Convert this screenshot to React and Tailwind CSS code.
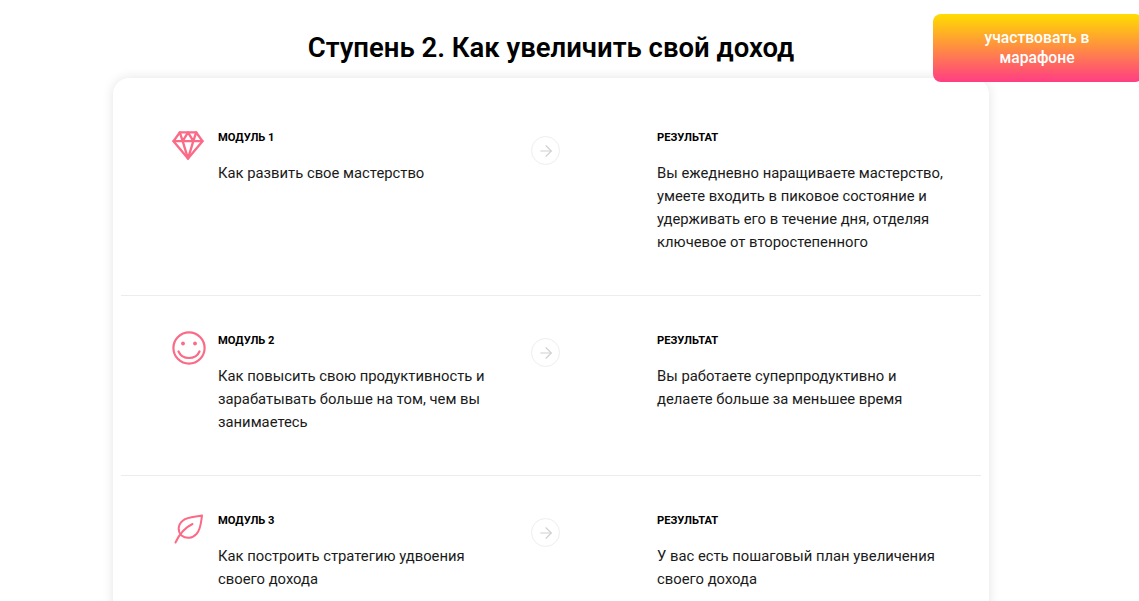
import React from 'react';
import { ArrowRight } from 'lucide-react';

const font = { fontFamily: 'Roboto, sans-serif' };

const DiamondIcon = () => (
  <svg width="32" height="29" viewBox="0 0 32 30" fill="none" stroke="#fb6a86" strokeWidth="2.4" strokeLinejoin="round" strokeLinecap="round">
    <path d="M7.5 1.5h17L31 10.5 16 28.5 1 10.5z" />
    <path d="M1 10.5h30M10.5 10.5 16 28.5l5.5-18M7.5 1.5l3 9L16 1.5l5.5 9 3-9" />
  </svg>
);

const SmileIcon = () => (
  <svg width="34" height="34" viewBox="0 0 34 34" fill="none" stroke="#fb6a86" strokeWidth="2.2" strokeLinecap="round">
    <circle cx="17" cy="17" r="15.6" />
    <circle cx="11" cy="12.5" r="1.9" fill="#fb6a86" stroke="none" />
    <circle cx="23" cy="12.5" r="1.9" fill="#fb6a86" stroke="none" />
    <path d="M6.5 20.5c2 4.5 6 6.5 10.5 6.5s8.500-2 10.500-6.500" />
  </svg>
);

const LeafIcon = () => (
  <svg width="30" height="30" viewBox="0 0 30 30" fill="none" stroke="#fb6a86" strokeWidth="2" strokeLinecap="round" strokeLinejoin="round">
    <path d="M28 1.500C22 3 14 2.500 9 6.500 3.500 11 3.500 17.500 7.500 21.500c4.500 3.500 11 3 15-1.500C27 15 27 8 28 1.500z" />
    <path d="M1.500 28.500C5 21 11 13.500 18.500 10" />
  </svg>
);

const modules = [
  {
    label: 'МОДУЛЬ 1',
    icon: <DiamondIcon />,
    iconClass: 'mt-[1px]',
    arrowClass: 'mt-[6px]',
    title: 'Как развить свое мастерство',
    result: 'Вы ежедневно наращиваете мастерство, умеете входить в пиковое состояние и удерживать его в течение дня, отделяя ключевое от второстепенного',
  },
  {
    label: 'МОДУЛЬ 2',
    icon: <SmileIcon />,
    iconClass: 'mt-[-2px]',
    arrowClass: 'mt-[5px]',
    title: 'Как повысить свою продуктивность и зарабатывать больше на том, чем вы занимаетесь',
    result: 'Вы работаете суперпродуктивно и делаете больше за меньшее время',
  },
  {
    label: 'МОДУЛЬ 3',
    icon: <LeafIcon />,
    iconClass: 'mt-[1px] pl-[2px]',
    arrowClass: 'mt-[5px]',
    title: 'Как построить стратегию удвоения своего дохода',
    result: 'У вас есть пошаговый план увеличения своего дохода',
  },
];

const ModuleRow = ({ item, first }) => (
  <div className={`flex mx-2 pl-[51px] pb-[41px] ${first ? 'pt-[52px]' : 'pt-[37px] border-t border-[#ececec]'}`}>
    <div className={`w-[46px] shrink-0 ${item.iconClass}`}>{item.icon}</div>
    <div className="w-[313px] shrink-0 pr-[28px]">
      <div className="text-[11.2px] leading-[16px] font-bold text-black">{item.label}</div>
      <p className="mt-[16px] text-[14.8px] leading-[23px] text-[#1a1a1a]">{item.title}</p>
    </div>
    <div className={`w-[29px] h-[29px] shrink-0 rounded-full border border-[#eeeeee] flex items-center justify-center text-[#d0d0d0] ${item.arrowClass}`}>
      <ArrowRight size={18} strokeWidth={1.5} />
    </div>
    <div className="ml-[97px] w-[292px] shrink-0">
      <div className="text-[11.2px] leading-[16px] font-bold text-black">РЕЗУЛЬТАТ</div>
      <p className="mt-[16px] text-[14.8px] leading-[23px] text-[#1a1a1a]">{item.result}</p>
    </div>
  </div>
);

export default function App() {
  return (
    <div className="relative h-[601px] overflow-hidden bg-white" style={font}>
      <div className="ml-[113px] w-[876px]">
        <h2 className="pt-[30px] h-[78px] text-center text-[27.5px] leading-[36px] font-semibold text-black">
          Ступень 2. Как увеличить свой доход
        </h2>
        <div className="rounded-[16px] bg-white shadow-[0_0_12px_rgba(0,0,0,0.11)]">
          {modules.map((item, i) => (
            <ModuleRow key={item.label} item={item} first={i === 0} />
          ))}
        </div>
      </div>
      <a className="absolute top-[14px] left-[933px] w-[210px] h-[68px] pr-[2px] rounded-[8px] bg-linear-to-b/srgb from-[#ffdd00] to-[#ff3d84] flex items-center justify-center text-center text-white text-[15.7px] leading-[20px] font-medium">
        участвовать в<br />марафоне
      </a>
    </div>
  );
}
